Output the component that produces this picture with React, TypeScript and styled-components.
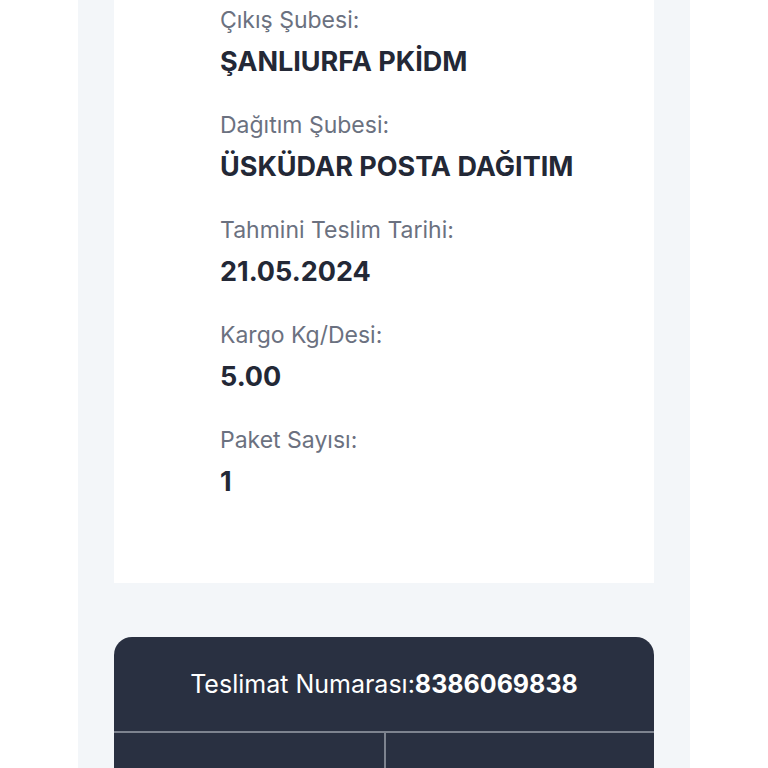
import React from "react";
import styled, { createGlobalStyle } from "styled-components";

const Global = createGlobalStyle`
  html, body {
    margin: 0;
    padding: 0;
    background: #ffffff;
    font-family: "Inter", "Roboto", sans-serif;
  }
`;

const Page = styled.div`
  width: 612px;
  min-height: 768px;
  margin: 0 auto;
  background-color: #f3f6f9;
  padding: 0 36px;
  box-sizing: border-box;
  overflow: hidden;
`;

const InfoCard = styled.div`
  background-color: #ffffff;
  padding: 5px 24px 84px 106px;
`;

const Field = styled.div`
  & + & {
    margin-top: 31px;
  }
`;

const Label = styled.div`
  font-size: 23px;
  line-height: 30px;
  color: #6b7180;
`;

const Value = styled.div`
  margin-top: 10px;
  font-size: 27px;
  line-height: 34px;
  font-weight: 700;
  color: #232836;
`;

const DeliveryCard = styled.div`
  margin-top: 54px;
  background-color: #293041;
  border-radius: 18px 18px 0 0;
  color: #ffffff;
`;

const DeliveryHeader = styled.div`
  height: 94px;
  display: flex;
  align-items: center;
  justify-content: center;
  font-size: 25px;
  border-bottom: 2px solid #7d838f;
`;

const Number = styled.span`
  font-weight: 700;
`;

const Columns = styled.div`
  display: grid;
  grid-template-columns: 1fr 1fr;
  height: 80px;
`;

const Column = styled.div`
  & + & {
    border-left: 2px solid #7d838f;
  }
`;

const fields = [
  { label: "Çıkış Şubesi:", value: "ŞANLIURFA PKİDM" },
  { label: "Dağıtım Şubesi:", value: "ÜSKÜDAR POSTA DAĞITIM" },
  { label: "Tahmini Teslim Tarihi:", value: "21.05.2024" },
  { label: "Kargo Kg/Desi:", value: "5.00" },
  { label: "Paket Sayısı:", value: "1" },
];

export default function App() {
  return (
    <>
      <Global />
      <Page>
        <InfoCard>
          {fields.map((f) => (
            <Field key={f.label}>
              <Label>{f.label}</Label>
              <Value>{f.value}</Value>
            </Field>
          ))}
        </InfoCard>
        <DeliveryCard>
          <DeliveryHeader>
            Teslimat Numarası:<Number>8386069838</Number>
          </DeliveryHeader>
          <Columns>
            <Column />
            <Column />
          </Columns>
        </DeliveryCard>
      </Page>
    </>
  );
}
